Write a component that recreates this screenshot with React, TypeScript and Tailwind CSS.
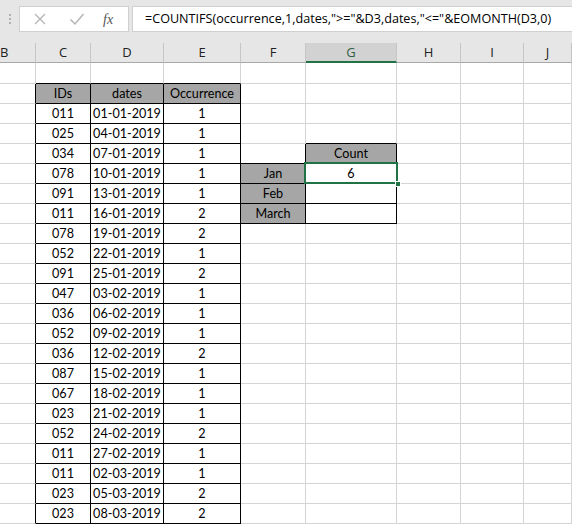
import React from 'react';

// column letters shown in the sheet (B..J)
const COLS = ['B', 'C', 'D', 'E', 'F', 'G', 'H', 'I', 'J'];

const rows: [string, string, string][] = [
  ['011', '01-01-2019', '1'],
  ['025', '04-01-2019', '1'],
  ['034', '07-01-2019', '1'],
  ['078', '10-01-2019', '1'],
  ['091', '13-01-2019', '1'],
  ['011', '16-01-2019', '2'],
  ['078', '19-01-2019', '2'],
  ['052', '22-01-2019', '1'],
  ['091', '25-01-2019', '2'],
  ['047', '03-02-2019', '1'],
  ['036', '06-02-2019', '1'],
  ['052', '09-02-2019', '1'],
  ['036', '12-02-2019', '2'],
  ['087', '15-02-2019', '1'],
  ['067', '18-02-2019', '1'],
  ['023', '21-02-2019', '1'],
  ['052', '24-02-2019', '2'],
  ['011', '27-02-2019', '1'],
  ['011', '02-03-2019', '1'],
  ['023', '05-03-2019', '2'],
  ['023', '08-03-2019', '2'],
];

const ROW_COUNT = 23;

// is the cell part of a bordered block
function inTable(r: number, c: number) {
  if (r >= 1 && r <= 22 && c >= 1 && c <= 3) return true;
  if (c === 5 && r >= 4 && r <= 7) return true;
  if (c === 4 && r >= 5 && r <= 7) return true;
  return false;
}

function cellInfo(r: number, c: number): { text: string; gray: boolean } {
  if (r === 1 && c >= 1 && c <= 3) return { text: ['IDs', 'dates', 'Occurrence'][c - 1], gray: true };
  if (r >= 2 && r <= 22 && c >= 1 && c <= 3) return { text: rows[r - 2][c - 1], gray: false };
  if (r === 4 && c === 5) return { text: 'Count', gray: true };
  if (c === 4 && r >= 5 && r <= 7) return { text: ['Jan', 'Feb', 'March'][r - 5], gray: true };
  if (c === 5 && r === 5) return { text: '6', gray: false };
  return { text: '', gray: false };
}

function Cell({ r, c }: { r: number; c: number }) {
  const info = cellInfo(r, c);
  const rightBlack = inTable(r, c) || inTable(r, c + 1);
  const bottomBlack = inTable(r, c) || inTable(r + 1, c);
  return (
    <div
      className={[
        'border-r border-b text-center text-[12.6px] leading-[20px] text-black overflow-hidden whitespace-nowrap',
        r === 0 ? 'h-[21px]' : 'h-[20px]',
        rightBlack ? 'border-r-black' : 'border-r-[#d4d4d4]',
        bottomBlack ? 'border-b-black' : 'border-b-[#d4d4d4]',
        info.gray ? 'bg-[#a6a6a6]' : 'bg-white',
      ].join(' ')}
    >
      {info.text}
    </div>
  );
}

function FormulaBar() {
  return (
    <div className="flex items-center h-[37px] pt-[1px]">
      <div className="w-[19px] flex flex-col items-center gap-[2px]">
        <span className="w-[2px] h-[2px] bg-[#b0b0b0]" />
        <span className="w-[2px] h-[2px] bg-[#b0b0b0]" />
        <span className="w-[2px] h-[2px] bg-[#b0b0b0]" />
      </div>
      <div className="w-[110px] h-[26px] bg-white border border-[#d0d0d0] flex items-center">
        <svg width="14" height="14" viewBox="0 0 14 14" className="ml-[13px]">
          <path d="M2 2 L12 12 M12 2 L2 12" stroke="#b4b4b4" strokeWidth="1.3" fill="none" />
        </svg>
        <svg width="16" height="14" viewBox="0 0 16 14" className="ml-[22px]">
          <path d="M1.5 7.5 L6 12 L14.5 2" stroke="#b4b4b4" strokeWidth="1.5" fill="none" />
        </svg>
        <span className="ml-[18px] text-[14px] italic text-[#555] font-['Liberation_Serif',serif]">fx</span>
      </div>
      <div className="ml-[3px] flex-1 h-[26px] bg-white border border-[#d0d0d0] border-r-0 flex items-center pl-[12px] text-[12.6px] text-black font-['Open_Sans',sans-serif] whitespace-nowrap overflow-hidden">
        =COUNTIFS(occurrence,1,dates,"&gt;="&amp;D3,dates,"&lt;="&amp;EOMONTH(D3,0)
      </div>
    </div>
  );
}

export default function App() {
  return (
    <div className="w-[572px] h-[525px] overflow-hidden bg-white font-['Lato',sans-serif] relative">
      <div className="bg-[#e6e6e6]">
        <FormulaBar />
        <div className="grid grid-cols-[36px_55px_73px_77px_65px_91px_64px_63px_48px] pt-[6px]">
          {COLS.map((l) => (
            <div
              key={l}
              className={
                l === 'G'
                  ? 'h-[20px] bg-[#d2d2d2] border-r border-r-[#c6c6c6] border-b-2 border-b-[#217346] text-center text-[13px] leading-[18px] text-[#2f5f47] font-["Open_Sans",sans-serif]'
                  : 'h-[20px] border-r border-r-[#c6c6c6] border-b border-b-[#a8a8a8] text-center text-[13px] leading-[19px] text-[#222] font-["Open_Sans",sans-serif]'
              }
            >
              {l === 'B' ? <span className="block text-left">B</span> : l}
            </div>
          ))}
        </div>
      </div>
      <div className="grid grid-cols-[36px_55px_73px_77px_65px_91px_64px_63px_48px]">
        {Array.from({ length: ROW_COUNT }).map((_, r) =>
          COLS.map((_, c) => <Cell key={r + '-' + c} r={r} c={c} />)
        )}
      </div>
      {/* active cell outline on G3 */}
      <div className="absolute left-[304px] top-[162px] w-[94px] h-[22px] border-2 border-[#217346] pointer-events-none" />
      <div className="absolute left-[395px] top-[181px] w-[6px] h-[6px] bg-[#217346] border border-white" />
    </div>
  );
}
